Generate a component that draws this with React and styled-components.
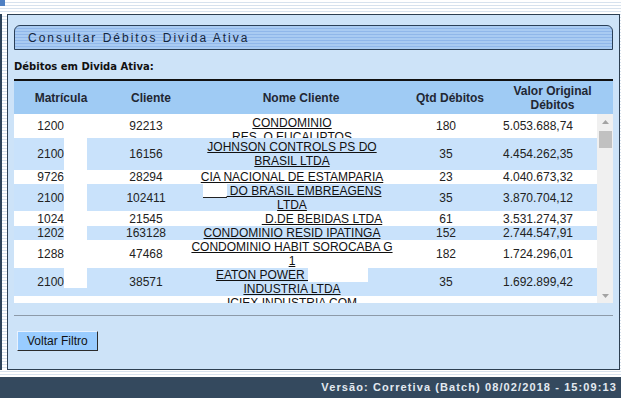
import React from 'react';
import styled, { createGlobalStyle } from 'styled-components';

const stripes = `repeating-linear-gradient(to bottom, #ffffff 0, #ffffff 2px, #d7e2ee 2px, #d7e2ee 3px)`;

const GlobalStyle = createGlobalStyle`
  html, body {
    margin: 0;
    padding: 0;
  }
  body {
    width: 621px;
    height: 398px;
    overflow: hidden;
    background: ${stripes};
    font-family: 'Liberation Sans', Arial, sans-serif;
  }
`;

const Page = styled.div`
  width: 621px;
  height: 398px;
  display: flex;
  flex-direction: column;
`;

const TopBand = styled.div`
  height: 14px;
  flex-shrink: 0;
`;

const Corner = styled.div`
  width: 5px;
  height: 6px;
  background: #4f80c3;
`;

const Middle = styled.div`
  display: flex;
  height: 356px;
  flex-shrink: 0;
  padding-right: 1px;
`;

const Rail = styled.div`
  width: 5px;
  border-left: 2px solid #2e4359;
  background: ${stripes};
`;

const Panel = styled.main`
  flex: 1;
  box-sizing: border-box;
  border: 1px solid #2d3f52;
  background: #cde3f8;
  padding: 10px 6px 0 6px;
  display: flex;
  flex-direction: column;
`;

const TitleBar = styled.div`
  box-sizing: border-box;
  height: 25px;
  border: 1px solid #2a3f57;
  border-radius: 6px 6px 0 0;
  background: repeating-linear-gradient(
    to bottom,
    #a9cbf2 0,
    #a9cbf2 2px,
    #90b7ea 2px,
    #90b7ea 3px
  );
  display: flex;
  align-items: center;
  padding-left: 13px;
  font-size: 12px;
  letter-spacing: 2px;
  color: #15263d;
`;

const Label = styled.div`
  margin: 11px 0 6px;
  font-family: 'DejaVu Sans', Verdana, sans-serif;
  font-weight: bold;
  font-size: 10px;
  line-height: 12px;
  color: #111;
`;

const Head = styled.div`
  display: grid;
  grid-template-columns: 94px 86px 214px 84px 1fr;
  height: 33px;
  background: #9fcbf4;
  border-top: 2px solid #111;
`;

const HeadCell = styled.div`
  display: flex;
  align-items: center;
  justify-content: center;
  text-align: center;
  font-weight: bold;
  font-size: 12px;
  line-height: 14px;
  color: #1f2733;
`;

const BodyWrap = styled.div`
  display: flex;
  height: 189px;
`;

const Rows = styled.div`
  position: relative;
  width: 583px;
  overflow: hidden;
  background: #fff;
`;

const Blank = styled.div`
  position: absolute;
  left: 50px;
  top: 0;
  width: 23px;
  height: 174px;
  background: #fff;
`;

const Row = styled.div`
  display: grid;
  grid-template-columns: 92px 80px 212px 96px 1fr;
  height: ${(p) => p.$h}px;
  background: ${(p) => (p.$alt ? '#c9e2fb' : '#ffffff')};
  overflow: hidden;
`;

const Cell = styled.div`
  display: flex;
  align-items: center;
  justify-content: ${(p) => p.$justify || 'center'};
  padding-right: ${(p) => p.$pr || 0}px;
  font-size: 12px;
  line-height: 14px;
  color: #222;
  overflow: hidden;
  white-space: nowrap;
`;

const NameCell = styled.div`
  display: flex;
  align-items: ${(p) => (p.$top ? 'flex-start' : 'center')};
  justify-content: center;
  padding-top: ${(p) => p.$pad || 0}px;
  overflow: hidden;
`;

const NameLink = styled.a`
  display: block;
  text-align: center;
  font-size: 12px;
  line-height: 14px;
  color: #111;
  text-decoration: underline;
  white-space: nowrap;
`;

const Redact = styled.span`
  display: inline-block;
  width: ${(p) => p.$w}px;
  height: 14px;
  vertical-align: top;
  background: #fff;
  box-shadow: ${(p) => (p.$line ? 'inset 0 -1px 0 #222' : 'none')};
`;

const ScrollBar = styled.div`
  width: 16px;
  background: #f0f0f0;
  display: flex;
  flex-direction: column;
  align-items: center;
`;

const Arrow = styled.div`
  height: 15px;
  width: 16px;
  display: flex;
  align-items: center;
  justify-content: center;
`;

const Thumb = styled.div`
  width: 13px;
  height: 17px;
  margin-top: 2px;
  background: #c1c1c1;
`;

const Track = styled.div`
  flex: 1;
`;

const Separator = styled.hr`
  margin: 12px 0 0;
  border: 0;
  height: 1px;
  background: #8d9aa8;
`;

const Button = styled.button`
  align-self: flex-start;
  box-sizing: border-box;
  height: 20px;
  margin: 15px 0 0 3px;
  padding: 0 9px;
  background: #99ccff;
  border: 1px solid;
  border-color: #e8f2ff #2b2b2b #2b2b2b #e8f2ff;
  font-family: 'Liberation Sans', Arial, sans-serif;
  font-size: 12px;
  color: #111;
`;

const Gap = styled.div`
  height: 7px;
  flex-shrink: 0;
`;

const Footer = styled.footer`
  height: 21px;
  flex-shrink: 0;
  background: #34495e;
  color: #e3eaf1;
  text-align: right;
  padding-right: 4px;
  font-weight: bold;
  font-size: 11px;
  line-height: 21px;
  letter-spacing: 1.1px;
`;

const rows = [
  { mat: '1200', cli: '92213', nome: ['CONDOMINIO', 'RES. Q.EUCALIPTOS'], qtd: '180', valor: '5.053.688,74', h: 24, top: true, pad: 2 },
  { mat: '2100', cli: '16156', nome: ['JOHNSON CONTROLS PS DO', 'BRASIL LTDA'], qtd: '35', valor: '4.454.262,35', h: 32 },
  { mat: '9726', cli: '28294', nome: ['CIA NACIONAL DE ESTAMPARIA'], qtd: '23', valor: '4.040.673,32', h: 14 },
  {
    mat: '2100', cli: '102411',
    nome: [<><Redact $w={24} $line /> DO BRASIL EMBREAGENS</>, 'LTDA'],
    qtd: '35', valor: '3.870.704,12', h: 27,
  },
  {
    mat: '1024', cli: '21545',
    nome: [<><Redact $w={60} /> D.DE BEBIDAS LTDA</>],
    qtd: '61', valor: '3.531.274,37', h: 15,
  },
  { mat: '1202', cli: '163128', nome: ['CONDOMINIO RESID IPATINGA'], qtd: '152', valor: '2.744.547,91', h: 14 },
  { mat: '1288', cli: '47468', nome: ['CONDOMINIO HABIT SOROCABA G', '1'], qtd: '182', valor: '1.724.296,01', h: 28 },
  {
    mat: '2100', cli: '38571',
    nome: [<>EATON POWER <Redact $w={60} /></>, 'INDUSTRIA LTDA'],
    qtd: '35', valor: '1.692.899,42', h: 28,
  },
  { mat: '', cli: '', nome: ['ICIEX INDUSTRIA COM'], qtd: '', valor: '', h: 28, top: true },
];

const UpIcon = () => (
  <svg width="7" height="4" viewBox="0 0 7 4">
    <path d="M3.5 0 L7 4 L0 4 Z" fill="#a3a3a3" />
  </svg>
);

const DownIcon = () => (
  <svg width="7" height="4" viewBox="0 0 7 4">
    <path d="M0 0 L7 0 L3.5 4 Z" fill="#a3a3a3" />
  </svg>
);

export default function App() {
  return (
    <>
      <GlobalStyle />
      <Page>
        <TopBand>
          <Corner />
        </TopBand>
        <Middle>
          <Rail />
          <Panel>
            <TitleBar>Consultar Débitos Divida Ativa</TitleBar>
            <Label>Débitos em Divida Ativa:</Label>
            <Head>
              <HeadCell>Matrícula</HeadCell>
              <HeadCell>Cliente</HeadCell>
              <HeadCell>Nome Cliente</HeadCell>
              <HeadCell>Qtd Débitos</HeadCell>
              <HeadCell>
                Valor Original
                <br />
                Débitos
              </HeadCell>
            </Head>
            <BodyWrap>
              <Rows>
                {rows.map((r, i) => (
                  <Row key={i} $h={r.h} $alt={i % 2 === 1}>
                    <Cell $justify="flex-end" $pr={42}>{r.mat}</Cell>
                    <Cell>{r.cli}</Cell>
                    <NameCell $top={r.top} $pad={r.pad}>
                      <NameLink href="#">
                        {r.nome.map((line, j) => (
                          <React.Fragment key={j}>
                            {j > 0 && <br />}
                            {line}
                          </React.Fragment>
                        ))}
                      </NameLink>
                    </NameCell>
                    <Cell>{r.qtd}</Cell>
                    <Cell $pr={15}>{r.valor}</Cell>
                  </Row>
                ))}
                <Blank />
              </Rows>
              <ScrollBar>
                <Arrow>
                  <UpIcon />
                </Arrow>
                <Thumb />
                <Track />
                <Arrow>
                  <DownIcon />
                </Arrow>
              </ScrollBar>
            </BodyWrap>
            <Separator />
            <Button>Voltar Filtro</Button>
          </Panel>
        </Middle>
        <Gap />
        <Footer>Versão: Corretiva (Batch) 08/02/2018 - 15:09:13</Footer>
      </Page>
    </>
  );
}
